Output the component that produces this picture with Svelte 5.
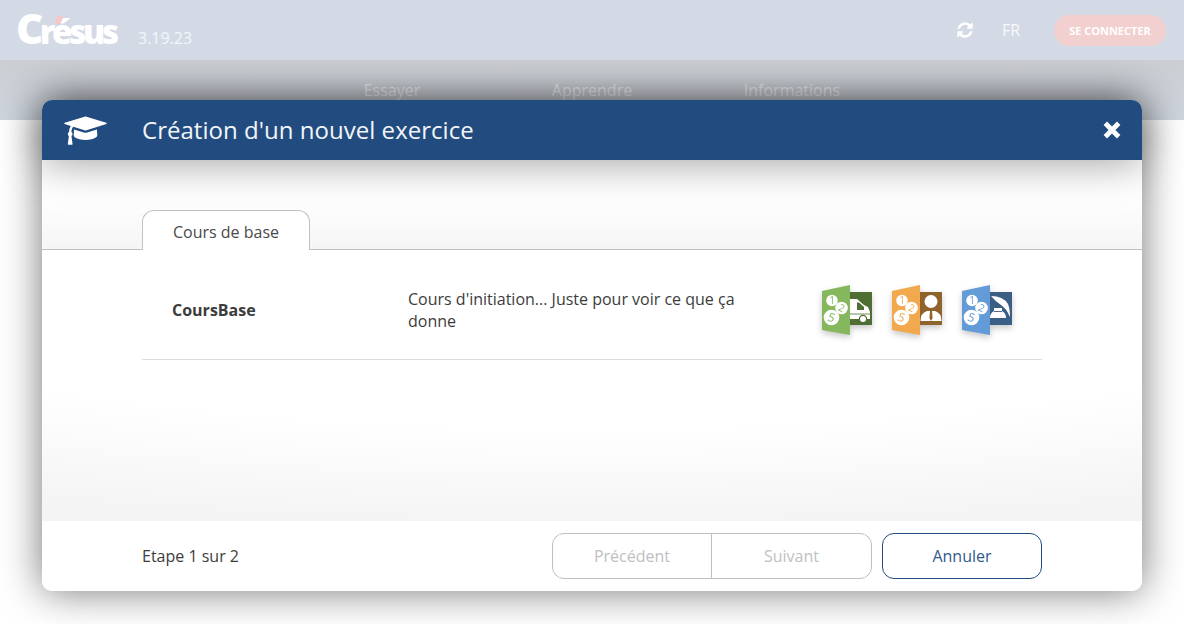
<script lang="ts">
  const navItems = ['Essayer', 'Apprendre', 'Informations'];
  const apps = [
    { id: 'truck', light: '#85b85c', dark: '#4e6e34' },
    { id: 'person', light: '#f2a94e', dark: '#8f632c' },
    { id: 'ink', light: '#629bd8', dark: '#3b5e85' }
  ];
</script>

<header class="topbar">
  <div class="brand">
    <span class="logo"><span class="logo-c">C</span>résus<i class="flag"></i></span>
    <span class="version">3.19.23</span>
  </div>
  <div class="actions">
    <svg class="refresh" viewBox="0 0 1792 1792" aria-hidden="true">
      <path fill="currentColor" d="M1639 1056q0 5-1 7-64 268-268 434.5t-478 166.5q-146 0-282.5-55t-243.5-157l-129 129q-19 19-45 19t-45-19-19-45v-448q0-26 19-45t45-19h448q26 0 45 19t19 45-19 45l-137 137q71 66 161 102t187 36q134 0 250-65t186-179q11-17 53-117 8-23 30-23h192q13 0 22.5 9.5t9.5 22.5zm25-800v448q0 26-19 45t-45 19h-448q-26 0-45-19t-19-45 19-45l138-138q-148-137-349-137-134 0-250 65t-186 179q-11 17-53 117-8 23-30 23h-199q-13 0-22.5-9.5t-9.5-22.5v-7q65-268 270-434.5t480-166.5q146 0 284 55.500t245 156.500l130-129q19-19 45-19t45 19 19 45z" />
    </svg>
    <span class="lang">FR</span>
    <button class="login">SE CONNECTER</button>
  </div>
</header>

<nav class="mainnav">
  {#each navItems as item}
    <span class="navitem">{item}</span>
  {/each}
</nav>

<div class="modal">
  <div class="modal-head">
    <svg class="cap" viewBox="0 0 2304 1792" aria-hidden="true">
      <path fill="currentColor" d="M1774 836l18 316q4 69-82 128t-235 93.500-323 34.500-323-34.500-235-93.500-82-128l18-316 574 181q22 7 48 7t48-7zm530-324q0 23-22 31l-1120 352q-4 1-10 1t-10-1l-652-206q-43 34-71 111.500t-34 178.500q63 36 63 109 0 69-58 107l58 433q2 14-8 25-9 11-24 11h-192q-15 0-24-11-10-11-8-25l58-433q-58-38-58-107 0-73 65-111 11-207 98-330l-333-104q-22-8-22-31t22-31l1120-352q4-1 10-1t10 1l1120 352q22 8 22 31z" />
    </svg>
    <h1>Création d'un nouvel exercice</h1>
    <svg class="close" viewBox="0 0 18 18" aria-hidden="true">
      <path d="M3 3 L15 15 M15 3 L3 15" stroke="currentColor" stroke-width="4.4" fill="none" />
    </svg>
  </div>

  <div class="modal-body">
    <div class="tabs">
      <div class="tab">Cours de base</div>
    </div>
    <div class="list">
      <div class="row">
        <div class="name">CoursBase</div>
        <div class="desc">Cours d'initiation... Juste pour voir ce que ça donne</div>
        <div class="apps">
          {#each apps as app}
            <svg class="app" viewBox="0 0 52 52" aria-hidden="true">
              <rect x="29" y="8" width="22" height="33" fill={app.dark} />
              {#if app.id === 'truck'}
                <path fill="#fff" d="M29 15 L36 15 L43 21 L47 23 L49 28 L49 35 L29 35 Z" />
                <path fill={app.dark} d="M38 18.500 L43 23 L43 26 L36 26 L36 18.500 Z" />
                <path d="M29 30 H49" stroke={app.dark} stroke-width="0.8" />
                <circle cx="42" cy="35" r="3.600" fill="#fff" stroke={app.dark} stroke-width="1.200" />
              {:else if app.id === 'person'}
                <circle cx="40" cy="17.500" r="6.500" fill="#fff" />
                <path fill="#fff" d="M29.500 37 Q29.500 29 36 27 L44 27 Q50.500 29 50.500 37 Z" />
                <path fill={app.dark} d="M39 27 L41 27 L41.600 34 L40 37 L38.400 34 Z" />
              {:else}
                <path fill="#fff" d="M30 12 Q42 12 47 20 Q49 25 49 33 Q45 24 40 21 Q35 18 30 12 Z" />
                <path fill="#fff" d="M33 24 H41 V27 Q45 29 45 34 H29 Q29 29 33 27 Z" />
                <path d="M33 27.500 H41" stroke={app.dark} stroke-width="0.900" />
              {/if}
              <polygon points="1,7 29,1 29,51 1,46" fill={app.light} />
              <circle cx="11" cy="16.500" r="5.800" fill="#fff" />
              <circle cx="20.500" cy="24" r="6.300" fill="#fff" />
              <circle cx="10.500" cy="33.500" r="7.800" fill="#fff" />
              <text x="11" y="20" fill={app.light}>1</text>
              <text x="20.500" y="27.500" fill={app.light} transform="rotate(25 20.500 24)">2</text>
              <text x="10.500" y="37.800" fill={app.light} class="big" transform="rotate(20 10.500 33.500)">5</text>
            </svg>
          {/each}
        </div>
      </div>
    </div>
  </div>

  <div class="modal-foot">
    <span class="step">Etape 1 sur 2</span>
    <div class="buttons">
      <div class="group">
        <button disabled>Précédent</button>
        <button disabled>Suivant</button>
      </div>
      <button class="cancel">Annuler</button>
    </div>
  </div>
</div>

<style>
  :global(body) {
    margin: 0;
    height: 624px;
    overflow: hidden;
    background: #fff;
    font-family: "Open Sans", sans-serif;
    color: #3c3c3c;
  }

  .topbar {
    position: relative;
    z-index: 3;
    height: 60px;
    box-sizing: border-box;
    padding: 0 18px;
    background: #d3dae6;
    display: flex;
    justify-content: space-between;
    align-items: center;
    color: #f2f5f9;
  }

  .brand {
    display: flex;
    align-items: center;
  }

  .logo {
    position: relative;
    width: 100px;
    margin-left: -2px;
    font-size: 33px;
    line-height: 30px;
    font-weight: 800;
    letter-spacing: -3.200px;
    color: #fff;
    white-space: nowrap;
  }

  .logo-c {
    font-size: 42px;
    letter-spacing: -3.600px;
  }

  .flag {
    position: absolute;
    left: 40px;
    top: 3px;
    width: 6px;
    height: 8px;
    background: #f2c8c8;
    transform: skewX(-20deg);
  }

  .version {
    margin-left: 22px;
    margin-top: 16px;
    font-size: 16px;
    color: #f4f6f9;
  }

  .actions {
    display: flex;
    align-items: center;
  }

  .refresh {
    width: 18px;
    height: 18px;
    color: #fff;
  }

  .lang {
    margin-left: 28px;
    width: 52px;
    font-size: 16px;
    color: #f8f9fb;
  }

  .login {
    width: 112px;
    height: 31px;
    border: 0;
    border-radius: 16px;
    background: #f2d0d0;
    color: #fff;
    font: 700 11px "Open Sans", sans-serif;
    padding: 0;
  }

  .mainnav {
    height: 60px;
    background: linear-gradient(#cbced2, #d0d6df);
    display: flex;
    justify-content: center;
    padding-top: 18px;
    box-sizing: border-box;
  }

  .navitem {
    width: 200px;
    text-align: center;
    font-size: 16px;
    line-height: 24px;
    color: #f0f2f5;
  }

  .modal {
    position: absolute;
    z-index: 2;
    left: 42px;
    top: 100px;
    width: 1100px;
    height: 491px;
    display: flex;
    flex-direction: column;
    border-radius: 10px;
    background: #fff;
    box-shadow: 0 0 40px rgba(0, 0, 0, 0.55);
  }

  .modal-head {
    height: 60px;
    flex: none;
    display: flex;
    align-items: center;
    padding: 0 20px 0 22px;
    background: #224c80;
    color: #fff;
    border-radius: 10px 10px 0 0;
    box-shadow: 0 4px 40px rgba(0, 0, 0, 0.36);
    position: relative;
  }

  .cap {
    width: 43px;
    height: 33px;
    margin-top: 1px;
  }

  h1 {
    margin: 0 0 0 35px;
    flex: 1;
    font-size: 24px;
    font-weight: 400;
    letter-spacing: 0.03px;
    line-height: 60px;
    color: #f2f5f8;
  }

  .close {
    width: 20px;
    height: 20px;
  }

  .modal-body {
    flex: 1;
    padding: 0 100px;
    background: radial-gradient(ellipse 1300px 240px at 50% 125px, #fff 60%, #f4f4f4 100%);
  }

  .tabs {
    height: 90px;
    box-sizing: border-box;
    margin: 0 -100px;
    padding: 50px 100px 0;
    border-bottom: 1px solid #c0c0c0;
    background: linear-gradient(#fff 40%, #f5f5f5);
    display: flex;
  }

  .tab {
    width: 168px;
    height: 40px;
    box-sizing: border-box;
    border: 1px solid #c0c0c0;
    border-bottom: 0;
    border-radius: 12px 12px 0 0;
    background: #fff;
    text-align: center;
    font-size: 16px;
    line-height: 42px;
    color: #4a4a4a;
  }

  .row {
    height: 110px;
    box-sizing: border-box;
    border-bottom: 1px solid #ddd;
    display: flex;
    align-items: center;
    padding: 10px 0 0 30px;
  }

  .name {
    width: 236px;
    font-size: 16px;
    font-weight: 700;
  }

  .desc {
    width: 360px;
    margin-right: 53px;
    font-size: 16px;
    line-height: 22px;
  }

  .apps {
    display: flex;
    gap: 18px;
  }

  .app {
    width: 52px;
    height: 52px;
    filter: drop-shadow(0 3px 3px rgba(0, 0, 0, 0.22));
  }

  .app text {
    font-family: "Open Sans", sans-serif;
    font-size: 10px;
    text-anchor: middle;
  }

  .app text.big {
    font-size: 12px;
  }

  .modal-foot {
    height: 70px;
    flex: none;
    box-sizing: border-box;
    padding: 0 100px;
    display: flex;
    justify-content: space-between;
    align-items: center;
    border-radius: 0 0 10px 10px;
    background: #fff;
  }

  .step {
    font-size: 16px;
  }

  .buttons {
    display: flex;
    gap: 10px;
  }

  .group {
    display: flex;
    width: 320px;
    height: 46px;
    box-sizing: border-box;
    border: 1px solid #c0c0c0;
    border-radius: 12px;
  }

  .group button {
    width: 158px;
    border: 0;
    background: none;
    padding: 0;
    font: 16px "Open Sans", sans-serif;
    color: #c0c0c0;
  }

  .group button + button {
    flex: 1;
    border-left: 1px solid #c0c0c0;
  }

  .cancel {
    width: 160px;
    height: 46px;
    border: 1px solid #224c80;
    border-radius: 12px;
    background: #fff;
    padding: 0;
    font: 16px "Open Sans", sans-serif;
    color: #2f5a8c;
  }
</style>
